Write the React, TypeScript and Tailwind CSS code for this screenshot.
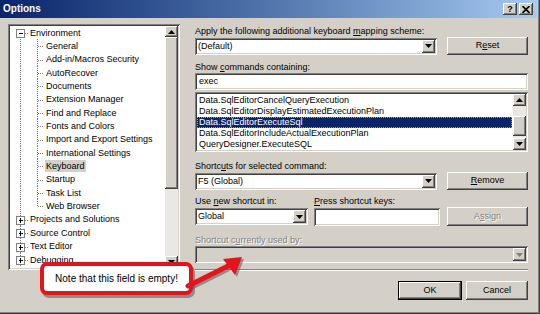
import React from "react";

const sunken =
  "shadow-[inset_1px_1px_#808080,inset_-1px_-1px_#ffffff,inset_2px_2px_#404040,inset_-2px_-2px_#d4d0c8]";
const raised =
  "shadow-[inset_-1px_-1px_#404040,inset_1px_1px_#ffffff,inset_-2px_-2px_#808080,inset_2px_2px_#d4d0c8]";
const disabledText = "text-[#808080] [text-shadow:1px_1px_0_#ffffff]";

function Arrow({ up, disabled }: { up?: boolean; disabled?: boolean }) {
  return (
    <svg width="7" height="4" viewBox="0 0 7 4">
      <polygon
        points={up ? "3.5,0 7,4 0,4" : "0,0 7,0 3.5,4"}
        fill={disabled ? "#808080" : "#000"}
      />
    </svg>
  );
}

function ScrollBtn({ up, h, disabled }: { up?: boolean; h: string; disabled?: boolean }) {
  return (
    <div className={`${raised} ${h} w-full bg-[#d4d0c8] flex items-center justify-center shrink-0`}>
      <Arrow up={up} disabled={disabled} />
    </div>
  );
}

function Combo({
  text,
  className,
  disabled,
}: {
  text: string;
  className: string;
  disabled?: boolean;
}) {
  return (
    <div
      className={`${sunken} ${className} h-[17px] flex p-[2px] ${
        disabled ? "bg-[#d4d0c8]" : "bg-white"
      }`}
    >
      <div className="flex-1 flex items-center pl-[1px] leading-[13px] whitespace-nowrap overflow-hidden">
        {text}
      </div>
      <div className={`${raised} w-[13px] h-full bg-[#d4d0c8] flex items-center justify-center`}>
        <Arrow disabled={disabled} />
      </div>
    </div>
  );
}

function Btn({
  children,
  className,
  isDefault,
}: {
  children: React.ReactNode;
  className: string;
  isDefault?: boolean;
}) {
  const inner = (
    <div className={`${raised} w-full h-full bg-[#d4d0c8] flex items-center justify-center`}>
      {children}
    </div>
  );
  if (isDefault) {
    return <div className={`${className} border border-black`}>{inner}</div>;
  }
  return <div className={className}>{inner}</div>;
}

type Kind = "open" | "child" | "childLast" | "closed";

function TreeLines({ kind }: { kind: Kind }) {
  const H = 13.35;
  const m = 6.5;
  const dot = { stroke: "#808080", strokeWidth: 1, strokeDasharray: "1 1" };
  const isTop = kind === "open" || kind === "closed";
  const W = isTop ? 19 : 35;
  return (
    <svg width={W} height={H} className="shrink-0" shapeRendering="crispEdges">
      {kind === "open" && <line x1="10.5" y1={m + 4.5} x2="10.5" y2={H} {...dot} />}
      {kind === "closed" && <line x1="10.5" y1="0" x2="10.5" y2={H} {...dot} />}
      {!isTop && <line x1="10.5" y1="0" x2="10.5" y2={H} {...dot} />}
      {kind === "child" && <line x1="27.5" y1="0" x2="27.5" y2={H} {...dot} />}
      {kind === "childLast" && <line x1="27.5" y1="0" x2="27.5" y2={m} {...dot} />}
      {!isTop && <line x1="28" y1={m + 0.5} x2="34" y2={m + 0.5} {...dot} />}
      {isTop && (
        <>
          <line x1="15" y1={m + 0.5} x2="19" y2={m + 0.5} {...dot} />
          <rect x="6.5" y={m - 3.5} width="8" height="8" fill="#fff" stroke="#808080" />
          <line x1="8.5" y1={m + 0.5} x2="13" y2={m + 0.5} stroke="#000" />
          {kind === "closed" && (
            <line x1="10.5" y1={m - 1.5} x2="10.5" y2={m + 3} stroke="#000" />
          )}
        </>
      )}
    </svg>
  );
}

const treeRows: { t: string; k: Kind; sel?: boolean }[] = [
  { t: "Environment", k: "open" },
  { t: "General", k: "child" },
  { t: "Add-in/Macros Security", k: "child" },
  { t: "AutoRecover", k: "child" },
  { t: "Documents", k: "child" },
  { t: "Extension Manager", k: "child" },
  { t: "Find and Replace", k: "child" },
  { t: "Fonts and Colors", k: "child" },
  { t: "Import and Export Settings", k: "child" },
  { t: "International Settings", k: "child" },
  { t: "Keyboard", k: "child", sel: true },
  { t: "Startup", k: "child" },
  { t: "Task List", k: "child" },
  { t: "Web Browser", k: "childLast" },
  { t: "Projects and Solutions", k: "closed" },
  { t: "Source Control", k: "closed" },
  { t: "Text Editor", k: "closed" },
  { t: "Debugging", k: "closed" },
];

const listRows = [
  "Data.SqlEditorCancelQueryExecution",
  "Data.SqlEditorDisplayEstimatedExecutionPlan",
  "Data.SqlEditorExecuteSql",
  "Data.SqlEditorIncludeActualExecutionPlan",
  "QueryDesigner.ExecuteSQL",
];

export default function App() {
  return (
    <div
      className="relative w-[540px] h-[314px] overflow-hidden bg-[#d4d0c8] text-black text-[9px] pr-[3px] pb-[3px] shadow-[inset_-1px_-1px_#404040,inset_-2px_-2px_#808080]"
      style={{ fontFamily: '"Liberation Sans", Arial, sans-serif' }}
    >
      {/* Title bar */}
      <div className="h-[18px] flex items-center justify-between bg-gradient-to-r from-[#0a246a] to-[#a6caf0] pl-[3px] pr-[4px]">
        <span className="text-white font-bold text-[10px] leading-[18px]">Options</span>
        <div className="flex items-center gap-[1px]">
          <div className={`${raised} w-[14px] h-[12px] bg-[#d4d0c8] flex items-center justify-center font-bold text-[9px] leading-[12px]`}>
            ?
          </div>
          <div className={`${raised} w-[14px] h-[12px] bg-[#d4d0c8] flex items-center justify-center ml-[1px]`}>
            <svg width="8" height="7" viewBox="0 0 8 7">
              <path d="M0.5 0 L7.5 7 M7.5 0 L0.5 7" stroke="#000" strokeWidth="1.6" />
            </svg>
          </div>
        </div>
      </div>

      {/* Body */}
      <div className="flex pl-[8px] pt-[6px] gap-[15px]">
        {/* Tree */}
        <div className={`${sunken} w-[172px] h-[246px] bg-white p-[2px] flex`}>
          <div className="flex-1 overflow-hidden">
            {treeRows.map((r) => (
              <div key={r.t} className="h-[13.35px] flex items-center whitespace-nowrap">
                <TreeLines kind={r.k} />
                <span
                  className={`leading-[12px] px-[1px] ${r.sel ? "bg-[#d4d0c8]" : ""}`}
                >
                  {r.t}
                </span>
              </div>
            ))}
          </div>
          <div className="w-[13px] h-full flex flex-col bg-[#eae8e4]">
            <ScrollBtn up h="h-[11px]" />
            <div className={`${raised} h-[152px] bg-[#d4d0c8] shrink-0`} />
            <div className="flex-1" />
            <ScrollBtn h="h-[12px]" />
          </div>
        </div>

        {/* Right column */}
        <div className="w-[333px] flex flex-col">
          <div className="mt-[1px] h-[12px] leading-[12px]">
            Apply the following additional keyboard <span className="underline">m</span>apping scheme:
          </div>
          <div className="h-[18px] flex items-center justify-between">
            <Combo text="(Default)" className="w-[242px]" />
            <Btn className="w-[81px] h-[18px]">
              R<span className="underline">e</span>set
            </Btn>
          </div>
          <div className="mt-[6px] h-[12px] leading-[12px]">
            Show <span className="underline">c</span>ommands containing:
          </div>
          <div className={`${sunken} h-[17px] bg-white flex items-center pl-[4px]`}>exec</div>
          <div className={`${sunken} mt-[2px] h-[60px] bg-white p-[2px] flex`}>
            <div className="flex-1 pt-[1px] pr-[1px]">
              {listRows.map((t, i) => (
                <div
                  key={t}
                  className={`h-[11px] leading-[11px] pl-[2px] whitespace-nowrap ${
                    i === 2
                      ? "bg-[#0a246a] text-white outline-1 outline-dotted outline-[#8a9cc8] -outline-offset-1"
                      : ""
                  }`}
                >
                  {t}
                </div>
              ))}
            </div>
            <div className="w-[13px] h-full flex flex-col bg-[#eae8e4]">
              <ScrollBtn up h="h-[12px]" />
              <div className="h-[10px] shrink-0" />
              <div className={`${raised} h-[20px] bg-[#d4d0c8] shrink-0`} />
              <div className="flex-1" />
              <ScrollBtn h="h-[12px]" />
            </div>
          </div>
          <div className="mt-[8px] h-[12px] leading-[12px]">
            Shortc<span className="underline">u</span>ts for selected command:
          </div>
          <div className="h-[18px] flex items-center justify-between">
            <Combo text="F5 (Global)" className="w-[242px]" />
            <Btn className="w-[81px] h-[18px]">
              <span className="underline">R</span>emove
            </Btn>
          </div>
          <div className="mt-[5px] h-[12px] leading-[12px] flex">
            <span className="w-[119px]">
              Use <span className="underline">n</span>ew shortcut in:
            </span>
            <span>
              <span className="underline">P</span>ress shortcut keys:
            </span>
          </div>
          <div className="h-[19px] flex items-center">
            <Combo text="Global" className="w-[113px]" />
            <div className={`${sunken} ml-[6px] w-[126px] h-[18px] bg-white`} />
            <Btn className="ml-auto w-[81px] h-[19px]">
              <span className={disabledText}>
                A<span className="underline">s</span>sign
              </span>
            </Btn>
          </div>
          <div className={`mt-[8px] h-[12px] leading-[12px] ${disabledText}`}>
            Shortcut c<span className="underline">u</span>rrently used by:
          </div>
          <Combo text="" className="w-full" disabled />
          <div className="mt-[6px] h-[2px] border-t border-[#808080] border-b border-b-white" />
          <div className="mt-[10px] flex justify-end gap-[4px]">
            <Btn className="w-[64px] h-[19px]" isDefault>
              OK
            </Btn>
            <Btn className="w-[62px] h-[19px]">Cancel</Btn>
          </div>
        </div>
      </div>

      {/* Callout */}
      <div className="absolute left-[40px] top-[262px] w-[153px] h-[33px] rounded-[7px] bg-white border-[4px] border-[#e3141b] shadow-[2px_3px_0_#8c8c8c] flex items-center justify-center text-[10px]">
        Note that this field is empty!
      </div>
      <svg className="absolute left-[180px] top-[250px]" width="70" height="45" viewBox="0 0 70 45">
        <g transform="translate(2,2)" opacity="0.55">
          <line x1="8" y1="36" x2="50" y2="15" stroke="#555" strokeWidth="5" />
          <polygon points="62,7 43,9 55,25" fill="#555" />
        </g>
        <line x1="8" y1="36" x2="50" y2="15" stroke="#e3141b" strokeWidth="5" strokeLinecap="round" />
        <polygon points="62,7 43,9 55,25" fill="#e3141b" />
      </svg>
    </div>
  );
}
